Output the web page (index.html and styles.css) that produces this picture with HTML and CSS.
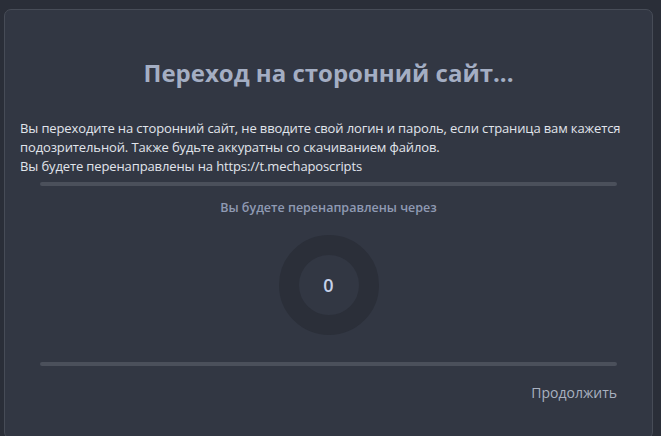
FILE: index.html
```html
<!DOCTYPE html>
<html lang="ru">
<head>
<meta charset="utf-8">
<title>Переход на сторонний сайт</title>
<link rel="stylesheet" href="styles.css">
</head>
<body>
<div class="card">
  <h1 class="title">Переход на сторонний сайт...</h1>
  <p class="text">Вы переходите на сторонний сайт, не вводите свой логин и пароль, если страница вам кажется подозрительной. Также будьте аккуратны со скачиванием файлов.<br>Вы будете перенаправлены на https://t.mechaposcripts</p>
  <div class="bar"></div>
  <div class="label">Вы будете перенаправлены через</div>
  <div class="ring"><span class="count">0</span></div>
  <div class="bar bar-bottom"></div>
  <div class="actions"><span class="continue">Продолжить</span></div>
</div>
</body>
</html>
```
FILE: styles.css
```css
html, body {
  height: 100%;
}
body {
  margin: 0;
  background: #2a2e38;
  padding: 9px 8px 0 4px;
  box-sizing: border-box;
  overflow: hidden;
  font-family: "Open Sans", "Noto Sans", sans-serif;
}
.card {
  box-sizing: border-box;
  height: 430px;
  background: #323743;
  border: 1px solid #474c57;
  border-radius: 7px;
  padding: 0 15px;
  display: flex;
  flex-direction: column;
}
.title {
  margin: 47px 0 0;
  font-size: 24px;
  line-height: 32px;
  font-weight: 700;
  color: #a4aec3;
  text-align: center;
}
.text {
  margin: 30px 0 0;
  font-size: 13px;
  line-height: 19px;
  letter-spacing: -0.12px;
  color: #e1e5ec;
}
.bar {
  height: 4px;
  border-radius: 2px;
  background: #4b505b;
  margin: 6px 20px 0;
}
.label {
  margin-top: 13px;
  text-align: center;
  font-size: 12.5px;
  font-weight: 600;
  color: #8f9ab3;
}
.ring {
  align-self: center;
  margin-top: 19px;
  width: 60px;
  height: 60px;
  border: 20px solid #2b2f39;
  border-radius: 50%;
  display: flex;
  align-items: center;
  justify-content: center;
}
.count {
  font-size: 18px;
  font-weight: 600;
  color: #c6d2ea;
}
.bar-bottom {
  margin-top: 27px;
}
.actions {
  display: flex;
  justify-content: flex-end;
  margin: 17px 20px 0;
}
.continue {
  font-size: 14px;
  color: #a9b1c0;
}
```
